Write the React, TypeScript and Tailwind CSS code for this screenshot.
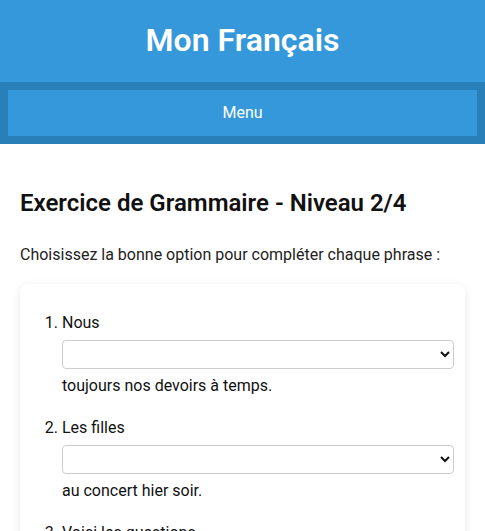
export default function App() {
  const items = [
    { n: 1, before: "Nous", after: "toujours nos devoirs à temps.", opts: ["faisons", "faites", "font"] },
    { n: 2, before: "Les filles", after: "au concert hier soir.", opts: ["sont allées", "sont allés", "ont allé"] },
    { n: 3, before: "Voici les questions", after: "que j'ai posées.", opts: ["que", "qui", "dont"] },
  ];

  return (
    <div className="min-h-screen bg-white text-[#333] font-['Roboto',sans-serif]">
      <header className="bg-[#3498db] h-[82px] flex items-center justify-center pb-[2px]">
        <h1 className="text-[32px] font-semibold text-white leading-none">Mon Français</h1>
      </header>
      <nav className="bg-[#2980b9] p-2">
        <div className="bg-[#3498db] h-[46px] flex items-center justify-center text-white text-base">
          Menu
        </div>
      </nav>

      <main className="px-5 pt-[45px]">
        <h2 className="text-2xl font-semibold text-[#111] leading-[1.2]">Exercice de Grammaire - Niveau 2/4</h2>
        <p className="mt-[25px] leading-6 text-[#222]">Choisissez la bonne option pour compléter chaque phrase :</p>

        <div className="mt-[17px] bg-white rounded-lg shadow-[0_2px_8px_rgba(0,0,0,0.1)] pl-5 pr-[11px] pt-[27px] pb-5">
          <ol className="list-decimal pl-[22px] text-[#111]">
            {items.map((it) => (
              <li key={it.n} className="leading-6 mb-[18px]">
                <div>{it.before}</div>
                <select
                  defaultValue=""
                  className="block w-full h-[29px] mt-[5px] px-1 border border-[#ccc] rounded bg-white text-sm"
                >
                  <option value=""></option>
                  {it.opts.map((o) => (
                    <option key={o} value={o}>
                      {o}
                    </option>
                  ))}
                </select>
                <div className="mt-[5px]">{it.after}</div>
              </li>
            ))}
          </ol>
        </div>
      </main>
    </div>
  );
}
